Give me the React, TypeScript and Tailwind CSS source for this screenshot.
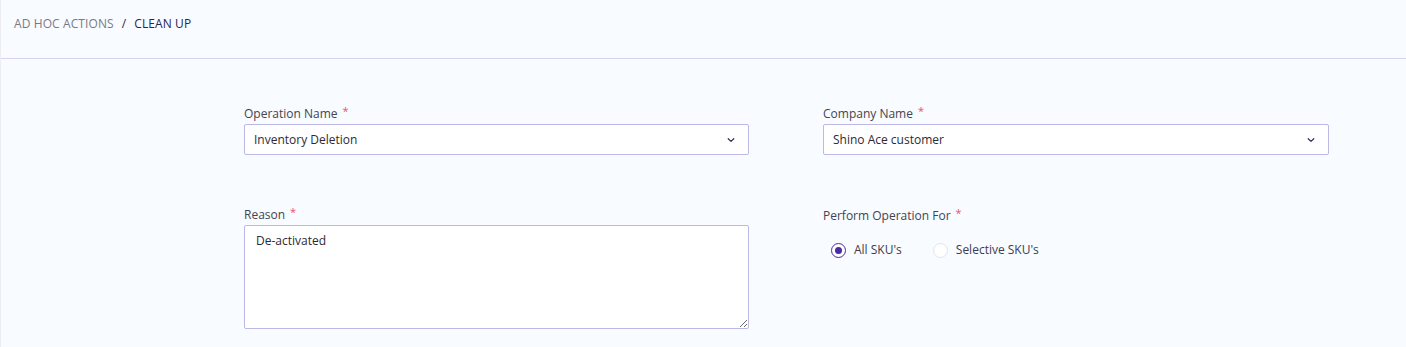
import { useState } from 'react';

const Chevron = () => (
  <svg width="10" height="10" viewBox="0 0 10 10" fill="none" className="shrink-0">
    <path d="M2.2 3.7 L5 6.4 L7.8 3.7" stroke="#2e2a5a" strokeWidth="1.2" strokeLinecap="round" strokeLinejoin="round" />
  </svg>
);

const Label = ({ text }: { text: string }) => (
  <div className="h-4 flex items-start text-[12px] leading-4 text-[#44444f]">
    {text}
    <span className="ml-[5px] text-[#f0506e] text-[11px] leading-[10px]">*</span>
  </div>
);

const Select = ({ value }: { value: string }) => (
  <div className="mt-[2px] h-[31px] flex items-center justify-between bg-white border border-[#bcb9e8] rounded-[2px] pl-[9px] pr-[12px] text-[12px] text-[#2b2b36]">
    <span>{value}</span>
    <Chevron />
  </div>
);

const Radio = ({ checked, label }: { checked: boolean; label: string }) => (
  <label className="flex items-center gap-[8px] text-[12px] text-[#3d3d4e]">
    {checked ? (
      <span className="w-[15px] h-[15px] rounded-full border-[1.5px] border-[#4a2aa8] flex items-center justify-center bg-white">
        <span className="w-[7px] h-[7px] rounded-full bg-[#4a2aa8]" />
      </span>
    ) : (
      <span className="w-[15px] h-[15px] rounded-full border border-[#e3e3ea] bg-white" />
    )}
    {label}
  </label>
);

const App = () => {
  const [reason, setReason] = useState<string>('De-activated');
  const [scope, setScope] = useState<'all' | 'selective'>('all');

  return (
    <div className="w-[1406px] h-[347px] bg-[#f8fbff] border-l border-[#eceef2] font-['Open_Sans',sans-serif] overflow-hidden">
      <div className="h-[59px] border-b border-[#d5d2f4] pl-[13px] pt-[16px] text-[12px] leading-4 tracking-[0.1px]">
        <span className="text-[#7a7a86]">AD HOC ACTIONS</span>
        <span className="text-[#2a2650] mx-[8px]">/</span>
        <span className="text-[#2a2650]">CLEAN UP</span>
      </div>
      <div className="pl-[243px] pt-[47px] flex gap-[74px]">
        <div className="w-[505px] flex flex-col">
          <Label text="Operation Name" />
          <Select value="Inventory Deletion" />
          <div className="mt-[52px]">
            <Label text="Reason" />
            <textarea
              value={reason}
              onChange={(e) => setReason(e.target.value)}
              className="mt-[2px] block w-full h-[104px] bg-white border border-[#bcb9e8] rounded-[2px] px-[11px] pt-[7px] text-[12px] leading-4 text-[#2b2b36] outline-none resize-y"
            />
          </div>
        </div>
        <div className="w-[506px] flex flex-col">
          <Label text="Company Name" />
          <Select value="Shino Ace customer" />
          <div className="mt-[53px]">
            <Label text="Perform Operation For" />
            <div className="mt-[17px] pl-[8px] flex items-center gap-[31px]">
              <div onClick={() => setScope('all')}>
                <Radio checked={scope === 'all'} label="All SKU's" />
              </div>
              <div onClick={() => setScope('selective')}>
                <Radio checked={scope === 'selective'} label="Selective SKU's" />
              </div>
            </div>
          </div>
        </div>
      </div>
    </div>
  );
};

export default App;
